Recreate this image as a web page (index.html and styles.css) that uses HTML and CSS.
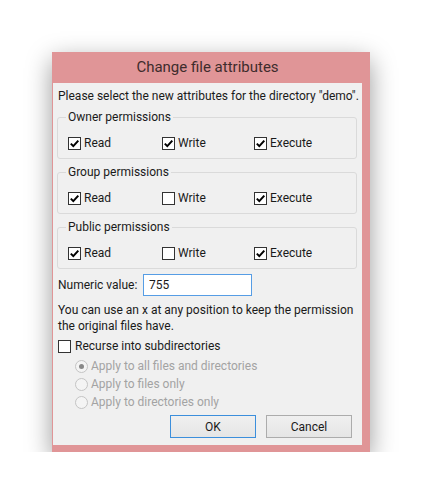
FILE: index.html
```html
<!DOCTYPE html>
<html lang="en">
<head>
    <meta charset="UTF-8">
    <meta name="viewport" content="width=device-width, initial-scale=1.0">
    <title>Change file attributes</title>
    <link rel="stylesheet" href="styles.css">
</head>
<body>
    <div class="window">
        <div class="titlebar">Change file attributes</div>

        <div class="client">
            <p class="intro">Please select the new attributes for the directory "demo".</p>

            <fieldset class="group">
                <legend>Owner permissions</legend>
                <div class="perm-row">
                    <label class="check"><span class="box"><svg viewBox="0 0 11 11"><path d="M1.8 5.6 L4.3 8.1 L9.3 2.6"/></svg></span>Read</label>
                    <label class="check"><span class="box"><svg viewBox="0 0 11 11"><path d="M1.8 5.6 L4.3 8.1 L9.3 2.6"/></svg></span>Write</label>
                    <label class="check"><span class="box"><svg viewBox="0 0 11 11"><path d="M1.8 5.6 L4.3 8.1 L9.3 2.6"/></svg></span>Execute</label>
                </div>
            </fieldset>

            <fieldset class="group">
                <legend>Group permissions</legend>
                <div class="perm-row">
                    <label class="check"><span class="box"><svg viewBox="0 0 11 11"><path d="M1.8 5.6 L4.3 8.1 L9.3 2.6"/></svg></span>Read</label>
                    <label class="check"><span class="box"></span>Write</label>
                    <label class="check"><span class="box"><svg viewBox="0 0 11 11"><path d="M1.8 5.6 L4.3 8.1 L9.3 2.6"/></svg></span>Execute</label>
                </div>
            </fieldset>

            <fieldset class="group">
                <legend>Public permissions</legend>
                <div class="perm-row">
                    <label class="check"><span class="box"><svg viewBox="0 0 11 11"><path d="M1.8 5.6 L4.3 8.1 L9.3 2.6"/></svg></span>Read</label>
                    <label class="check"><span class="box"></span>Write</label>
                    <label class="check"><span class="box"><svg viewBox="0 0 11 11"><path d="M1.8 5.6 L4.3 8.1 L9.3 2.6"/></svg></span>Execute</label>
                </div>
            </fieldset>

            <div class="numeric-row">
                <label for="numeric" class="numeric-label">Numeric value:</label>
                <input type="text" id="numeric" class="textbox" value="755">
            </div>

            <p class="help">You can use an x at any position to keep the permission<br>the original files have.</p>

            <label class="check recurse"><span class="box"></span>Recurse into subdirectories</label>

            <div class="radios">
                <div class="radio"><span class="dot selected"></span>Apply to all files and directories</div>
                <div class="radio"><span class="dot"></span>Apply to files only</div>
                <div class="radio"><span class="dot"></span>Apply to directories only</div>
            </div>

            <div class="buttons">
                <button class="button default">OK</button>
                <button class="button">Cancel</button>
            </div>
        </div>
    </div>
</body>
</html>
```

FILE: styles.css
```css
* {
    box-sizing: border-box;
}

body {
    margin: 0;
    background-color: #ffffff;
    font-family: Roboto, "Noto Sans", sans-serif;
    font-size: 12px;
    line-height: 16px;
    color: #1a1a1a;
    white-space: nowrap;
}

.window {
    width: 318px;
    margin: 52px 0 0 52px;
    padding: 0 8px 7px 1px;
    background-color: #e09597;
    box-shadow: 0 8px 24px rgba(0, 0, 0, 0.4);
}

.titlebar {
    height: 31px;
    line-height: 31px;
    text-align: center;
    font-size: 15px;
    color: #3e2c2c;
}

.client {
    background-color: #f0f0f0;
    padding: 5px 5px 7px 5px;
}

.intro {
    margin: 0 0 5px 0;
}

.group {
    margin: 0 0 5px -1px;
    padding: 10px 0 7px 10px;
    border: 1px solid #dadada;
    border-radius: 3px;
    min-width: 0;
}

.group legend {
    padding: 0 2px;
    margin-left: -2px;
}

.perm-row {
    display: grid;
    grid-template-columns: 94px 92px auto;
    height: 16px;
}

.check {
    display: flex;
    align-items: center;
    height: 16px;
}

.box {
    width: 13px;
    height: 13px;
    border: 1px solid #333;
    background-color: #fff;
    margin-right: 3px;
    flex-shrink: 0;
}

.box svg {
    display: block;
    width: 11px;
    height: 11px;
}

.box path {
    fill: none;
    stroke: #000;
    stroke-width: 2;
}

.numeric-row {
    display: flex;
    align-items: center;
    margin-top: 5px;
    height: 22px;
}

.numeric-label {
    width: 85px;
}

.textbox {
    width: 109px;
    height: 22px;
    border: 1px solid #569de5;
    padding: 0 5px;
    font-family: inherit;
    font-size: 12px;
    color: #1a1a1a;
    background-color: #fff;
    outline: none;
}

.help {
    margin: 6px 0 0 0;
}

.recurse {
    margin-top: 4px;
}

.recurse .box {
    margin-right: 4px;
}

.radios {
    margin-top: 3px;
    padding-left: 17px;
    color: #a3a3a3;
}

.radio {
    display: flex;
    align-items: center;
    height: 18px;
}

.dot {
    width: 13px;
    height: 13px;
    border: 1px solid #c4c4c4;
    border-radius: 50%;
    background-color: #f4f4f4;
    margin-right: 3px;
    display: flex;
    align-items: center;
    justify-content: center;
}

.dot.selected::after {
    content: "";
    width: 5px;
    height: 5px;
    border-radius: 50%;
    background-color: #888;
}

.buttons {
    display: flex;
    justify-content: flex-end;
    gap: 10px;
    margin-top: 4px;
    padding-right: 5px;
}

.button {
    width: 86px;
    height: 23px;
    border: 1px solid #acacac;
    background: linear-gradient(#f0f0f0, #e5e5e5);
    font-family: inherit;
    font-size: 12px;
    color: #1a1a1a;
    padding: 0;
}

.button.default {
    border-color: #3c8fdc;
}
```
